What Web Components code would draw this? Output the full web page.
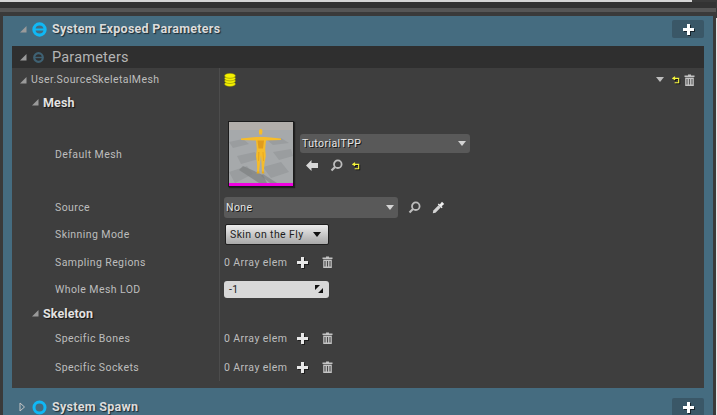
<!DOCTYPE html>
<html>
<head>
<meta charset="utf-8">
<style>
  html, body { margin: 0; height: 415px; overflow: hidden; background: #3a3a3a; font-family: Roboto, "Noto Sans", sans-serif; }
  body { display: flex; }
  main { width: 716px; flex: none; }
  .edge { width: 1px; margin-top: 18px; background: #e8e8e8; }
</style>
</head>
<body>
<main>
<top-strip></top-strip>
<stack-section title="System Exposed Parameters" icon="exposed" open>
  <param-panel>
    <param-row kind="user" label="User.SourceSkeletalMesh" height="23">
      <span style="display:flex;flex:1;align-items:center">
        <svg width="12" height="14" viewBox="0 0 12 14" style="margin-left:4px">
          <g fill="#f4f000" stroke="#77750a" stroke-width=".5">
            <ellipse cx="6" cy="11" rx="5.500" ry="2.500"/>
            <ellipse cx="6" cy="8" rx="5.500" ry="2.500"/>
            <ellipse cx="6" cy="5.400" rx="5.500" ry="2.500"/>
            <ellipse cx="6" cy="2.800" rx="5.500" ry="2.500"/>
          </g>
        </svg>
        <row-actions></row-actions>
      </span>
    </param-row>
    <param-row kind="category" label="Mesh" height="22"></param-row>
    <param-row label="Default Mesh" height="82">
      <mesh-picker></mesh-picker>
    </param-row>
    <param-row label="Source" height="24">
      <combo-box text="None" width="174" height="21" style="margin-left:4px"></combo-box>
      <icon-btn name="search" style="margin-left:10px"></icon-btn>
      <icon-btn name="dropper" style="margin-left:11px"></icon-btn>
    </param-row>
    <param-row label="Skinning Mode" height="30">
      <light-combo text="Skin on the Fly"></light-combo>
    </param-row>
    <param-row label="Sampling Regions" height="26"><array-value></array-value></param-row>
    <param-row label="Whole Mesh LOD" height="28"><number-box value="-1"></number-box></param-row>
    <param-row kind="category" label="Skeleton" height="20"></param-row>
    <param-row label="Specific Bones" height="30"><array-value></array-value></param-row>
    <param-row label="Specific Sockets" height="28"><array-value></array-value></param-row>
  </param-panel>
</stack-section>
<stack-section title="System Spawn" icon="spawn"></stack-section>
</main>
<div class="edge"></div>

<script>
const TRI_DOWN = `<svg width="8" height="8" viewBox="0 0 8 8"><path d="M7.500 1v6.500H1z" fill="#9a9a9a"/></svg>`;
const UNDO = `<svg width="8" height="8" viewBox="0 0 9 9" style="filter:drop-shadow(1px 1px 0 #111)"><path d="M3.500 .8 1 2.600l2.500 1.700M1.500 2.600h6v5H3" fill="none" stroke="#f5f53c" stroke-width="1.300"/></svg>`;
const trash = (bars) => `<svg width="11" height="12" viewBox="0 0 11 12"><path d="M4 .5h3v1h3.500V3H.5V1.500H4z" fill="#c4c4c4"/><path d="M1.200 3.600h8.600V12H1.200z" fill="#c4c4c4"/><path d="M3 5v5.500M5.500 5v5.500M8 5v5.500" stroke="${bars}" stroke-width="1.100"/></svg>`;

class TopStrip extends HTMLElement {
  constructor() {
    super();
    this.attachShadow({mode: "open"}).innerHTML = `
    <style>
      :host { display: block; height: 16px; background: #3a3a3a; }
      .light { height: 2px; width: 692px; background: #d6d6d6; }
      .gap { height: 6px; background: #333; }
      .bar { height: 4px; background: #565656; }
    </style>
    <div class="light"></div><div class="gap"></div><div class="bar"></div>`;
  }
}
customElements.define("top-strip", TopStrip);

class StackSection extends HTMLElement {
  constructor() {
    super();
    const open = this.hasAttribute("open");
    const icon = this.getAttribute("icon") === "spawn"
      ? `<svg width="15" height="15" viewBox="0 0 15 15"><circle cx="7.500" cy="7.500" r="5.500" fill="none" stroke="#10b8f5" stroke-width="3"/></svg>`
      : `<svg width="15" height="15" viewBox="0 0 15 15"><circle cx="7.500" cy="7.500" r="5.600" fill="none" stroke="#10b8f5" stroke-width="3.200"/><path d="M3 7.500h9" stroke="#10b8f5" stroke-width="2"/></svg>`;
    const arrow = open
      ? TRI_DOWN
      : `<svg width="7" height="10" viewBox="0 0 7 10"><path d="M1 1l4.500 4L1 9z" fill="none" stroke="#c4c4c4" stroke-width="1"/></svg>`;
    this.attachShadow({mode: "open"}).innerHTML = `
    <style>
      :host { display: block; margin: 0 3px 0 3px; background: #456c80; }
      header { height: 30px; box-sizing: border-box; padding: 0 9px 4px 16px; display: flex; align-items: center; }
      .arrow { width: 13px; display: flex; }
      .icon { display: flex; width: 15px; margin-right: 5px; }
      .title { flex: 1; margin-bottom: 2px; color: #dcdcdc; font: bold 12.500px Roboto, sans-serif; text-shadow: 1px 1px 1px #1c2a32; letter-spacing: .28px; }
      .add { width: 32px; height: 18px; border-radius: 2px; background: #3a5767; display: flex; align-items: center; justify-content: center; }
      .add svg { width: 11px; height: 11px; filter: drop-shadow(1px 1px 0 #16222a); }
      .body { padding: 0 9px 6px 9px; }
      :host(:not([open])) .body { display: none; }
    </style>
    <header>
      <span class="arrow">${arrow}</span>
      <span class="icon">${icon}</span>
      <span class="title">${this.getAttribute("title")}</span>
      <span class="add"><svg viewBox="0 0 11 11"><path d="M4 0h3v4h4v3H7v4H4V7H0V4h4z" fill="#fff"/></svg></span>
    </header>
    <div class="body"><slot></slot></div>`;
  }
}
customElements.define("stack-section", StackSection);

class ParamPanel extends HTMLElement {
  constructor() {
    super();
    this.attachShadow({mode: "open"}).innerHTML = `
    <style>
      :host { display: block; background: #3e3e3e; padding-bottom: 7px; }
      header { height: 22px; background: #2f2f2f; display: flex; align-items: center; padding-left: 7px; }
      .arrow { width: 14px; display: flex; }
      svg.i { margin-right: 8px; }
      .t { color: #b4b4b4; font: 14.500px Roboto, sans-serif; letter-spacing: .2px; }
    </style>
    <header>
      <span class="arrow">${TRI_DOWN}</span>
      <svg class="i" width="11" height="11" viewBox="0 0 11 11"><circle cx="5.500" cy="5.500" r="4.300" fill="none" stroke="#3f6274" stroke-width="2.200"/><path d="M2 5.500h7" stroke="#3f6274" stroke-width="1.400"/></svg>
      <span class="t">Parameters</span>
    </header>
    <slot></slot>`;
  }
}
customElements.define("param-panel", ParamPanel);

class ParamRow extends HTMLElement {
  constructor() {
    super();
    const kind = this.getAttribute("kind") || "prop";
    const arrow = kind === "prop" ? "" : TRI_DOWN;
    this.attachShadow({mode: "open"}).innerHTML = `
    <style>
      :host { display: grid; grid-template-columns: 207px 1fr; height: ${this.getAttribute("height")}px; color: #bdbdbd; font: 10.500px Roboto, sans-serif; letter-spacing: .42px; }
      .name { display: flex; align-items: center; min-width: 0; white-space: nowrap; }
      .arrow { display: flex; }
      .user { padding-left: 7px; }
      .user .arrow { width: 12px; }
      .category { padding-left: 19px; color: #e2e2e2; font: bold 12.500px Roboto, sans-serif; text-shadow: 1px 1px 1px #111; letter-spacing: .1px; }
      .category .arrow { width: 12px; }
      .prop { padding-left: 43px; }
      .value { display: flex; align-items: center; min-width: 0; border-left: 1px solid #4c4c4c; }
    </style>
    <div class="name ${kind}"><span class="arrow">${arrow}</span>${this.getAttribute("label")}</div>
    <div class="value"><slot></slot></div>`;
  }
}
customElements.define("param-row", ParamRow);

class RowActions extends HTMLElement {
  constructor() {
    super();
    this.attachShadow({mode: "open"}).innerHTML = `
    <style>
      :host { margin-left: auto; margin-right: 9px; display: flex; align-items: center; }
      .a { margin-right: 8px; }
      .u { display: flex; margin-right: 4px; }
    </style>
    <svg class="a" width="8" height="5" viewBox="0 0 8 5"><path d="M0 0h8L4 5z" fill="#bdbdbd"/></svg>
    <span class="u">${UNDO}</span>
    ${trash("#5a5a5a")}`;
  }
}
customElements.define("row-actions", RowActions);

class ComboBox extends HTMLElement {
  constructor() {
    super();
    this.attachShadow({mode: "open"}).innerHTML = `
    <style>
      :host { display: flex; align-items: center; width: ${this.getAttribute("width")}px; height: ${this.getAttribute("height")}px; box-sizing: border-box; padding: 0 4px 0 2px; border-radius: 3px; background: #595959; color: #e4e4e4; font: 10.500px Roboto, sans-serif; letter-spacing: .4px; text-shadow: 1px 1px 0 #151515; }
      span { flex: 1; }
    </style>
    <span>${this.getAttribute("text")}</span>
    <svg width="8" height="5" viewBox="0 0 8 5"><path d="M0 0h8L4 5z" fill="#d4d4d4"/></svg>`;
  }
}
customElements.define("combo-box", ComboBox);

class LightCombo extends HTMLElement {
  constructor() {
    super();
    this.attachShadow({mode: "open"}).innerHTML = `
    <style>
      :host { display: flex; align-items: center; margin-left: 5px; width: 104px; height: 21px; box-sizing: border-box; padding: 0 7px 0 4px; border-radius: 2px; border: 1px solid #1f1f1f; background: linear-gradient(#ececec, #a8a8a8); color: #1e1e1e; font: 10.500px Roboto, sans-serif; letter-spacing: .4px; }
      span { flex: 1; white-space: nowrap; }
    </style>
    <span>${this.getAttribute("text")}</span>
    <svg width="8" height="5" viewBox="0 0 8 5"><path d="M0 0h8L4 5z" fill="#111"/></svg>`;
  }
}
customElements.define("light-combo", LightCombo);

class NumberBox extends HTMLElement {
  constructor() {
    super();
    this.attachShadow({mode: "open"}).innerHTML = `
    <style>
      :host { display: flex; align-items: center; margin-left: 4px; width: 105px; height: 17px; box-sizing: border-box; padding: 0 6px 0 5px; border-radius: 3px; background: #d9d9d9; color: #222; font: 10.500px Roboto, sans-serif; }
      span { flex: 1; }
    </style>
    <span>${this.getAttribute("value")}</span>
    <svg width="8" height="8" viewBox="0 0 8 8"><path d="M0 0h5L0 5zM8 3v5H3z" fill="#111"/></svg>`;
  }
}
customElements.define("number-box", NumberBox);

class ArrayValue extends HTMLElement {
  constructor() {
    super();
    this.attachShadow({mode: "open"}).innerHTML = `
    <style>
      :host { display: flex; align-items: center; margin-left: 4px; color: #bdbdbd; font: 10.500px Roboto, sans-serif; letter-spacing: .42px; }
      .txt { width: 64px; white-space: nowrap; }
      .plus { margin-left: 9px; filter: drop-shadow(1px 1px 0 #1c1c1c); }
      .trash { display: flex; margin-left: 14px; }
    </style>
    <span class="txt">0 Array elem</span>
    <svg class="plus" width="11" height="11" viewBox="0 0 11 11"><path d="M4 0h3v4h4v3H7v4H4V7H0V4h4z" fill="#e8e8e8"/></svg>
    <span class="trash">${trash("#4a4a4a")}</span>`;
  }
}
customElements.define("array-value", ArrayValue);

class IconBtn extends HTMLElement {
  constructor() {
    super();
    const icons = {
      search: `<svg width="13" height="13" viewBox="0 0 13 13"><circle cx="7.800" cy="5.200" r="3.800" fill="none" stroke="#bdbdbd" stroke-width="1.800"/><path d="M5 8 1.500 11.500" stroke="#bdbdbd" stroke-width="2.200"/></svg>`,
      dropper: `<svg width="13" height="13" viewBox="0 0 13 13"><path d="M.8 12.200 1.300 9.500 6.500 4.300 8.700 6.500 3.500 11.700z" fill="#d4d4d4"/><path d="M5.800 3.400 6.800 2.400 7.800 3.400 10 .8 12.200 3 9.600 5.200 10.600 6.200 9.600 7.200z" fill="#f0f0f0"/></svg>`,
      back: `<svg width="12" height="11" viewBox="0 0 12 11"><path d="M0 5.500 5.500 0v3H12v5H5.500v3z" fill="#d8d8d8"/></svg>`,
      undo: UNDO
    };
    this.attachShadow({mode: "open"}).innerHTML = `
    <style>:host { display: inline-flex; }</style>${icons[this.getAttribute("name")]}`;
  }
}
customElements.define("icon-btn", IconBtn);

class MeshPicker extends HTMLElement {
  constructor() {
    super();
    this.attachShadow({mode: "open"}).innerHTML = `
    <style>
      :host { display: flex; align-items: center; margin-left: 8px; }
      .thumb { width: 64px; height: 64px; border: 1px solid #1c1c1c; box-shadow: 1px 1px 1px #222; display: block; flex: none; }
      .side { margin-left: 6px; display: flex; flex-direction: column; gap: 6px; padding-bottom: 2px; }
      .tools { display: flex; align-items: center; padding-left: 6px; height: 13px; }
    </style>
    <svg class="thumb" viewBox="0 0 64 64">
      <rect width="64" height="8" fill="#b2aeaa"/>
      <rect y="8" width="64" height="53" fill="#a6a9ab"/>
      <g fill="#9a9d9f">
        <path d="M0 20 14 17 20 22 4 26zM38 18 52 16 60 21 44 23zM8 34 26 30 30 37 12 42zM44 30 62 27 64 34 50 38zM0 50 18 44 24 52 6 61zM34 45 52 40 60 50 42 56z"/>
      </g>
      <path d="M14 44 34 53 38 61 30 61 10 48z" fill="#7d8082" opacity=".7"/>
      <path d="M34 52 48 61H41L32 54z" fill="#7d8082" opacity=".6"/>
      <g fill="#f6bc2a">
        <path d="M29.800 9 31 7h1.500L33.500 9 33 12.500h-2.800z"/>
        <path d="M12 16.500 27.500 15h8.500L52 16.500V18L37 18.500 36.200 27 36.800 34 35.500 41 34.800 50h-1.800L32.500 41 32 33 31 41 30 50h-1.800L28 41 27 34 27.800 27 27 18.500 12 18z"/>
        <path d="M28 49.500h2.500v2h-3zM32.800 49.500h2.200l.5 2h-2.700z" fill="#e8ab1c"/>
        <path d="M28.500 18.500h6.500l-1 8h-4.500z" fill="#e09c1c"/>
        <path d="M29 30h1.500l-.5 9h-1zM33.500 30h1l.5 9h-1z" fill="#e8a920"/>
      </g>
      <rect y="61" width="64" height="3" fill="#f000e0"/>
    </svg>
    <div class="side">
      <combo-box text="TutorialTPP" width="170" height="19"></combo-box>
      <div class="tools">
        <icon-btn name="back"></icon-btn>
        <icon-btn name="search" style="margin-left:12px"></icon-btn>
        <icon-btn name="undo" style="margin-left:9px"></icon-btn>
      </div>
    </div>`;
  }
}
customElements.define("mesh-picker", MeshPicker);
</script>
</body>
</html>
